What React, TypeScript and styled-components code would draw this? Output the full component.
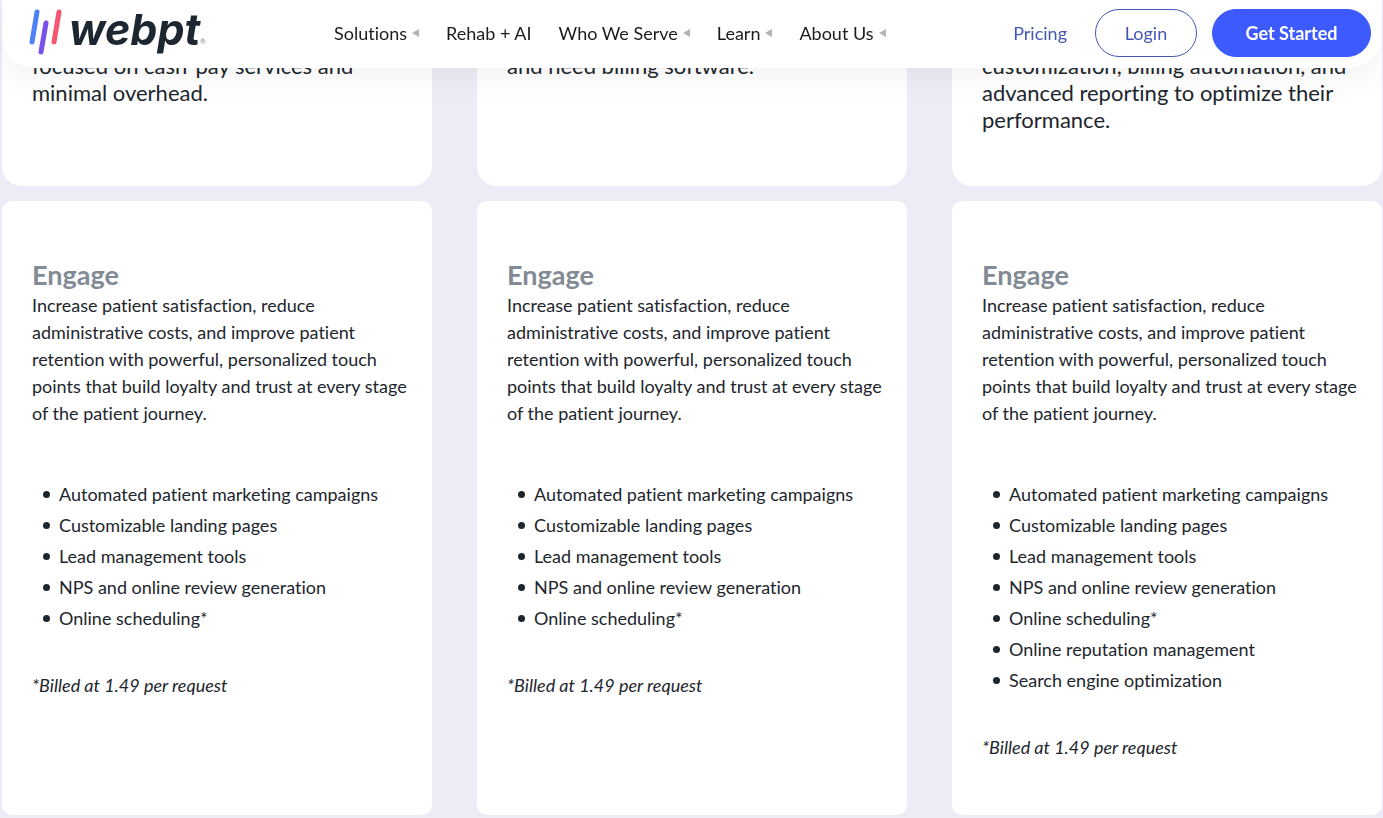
import React from "react";
import styled, { createGlobalStyle } from "styled-components";

const GlobalStyle = createGlobalStyle`
  *, *::before, *::after { box-sizing: border-box; }
  body {
    margin: 0;
    background: #ebecf5;
    color: #1d262d;
    font-family: Lato, "Liberation Sans", sans-serif;
    font-size: 18px;
    line-height: 27px;
    font-variant-ligatures: none;
  }
`;

const Header = styled.header`
  position: fixed;
  z-index: 2;
  top: 0;
  left: 2px;
  right: 2px;
  height: 68px;
  padding: 0 10px 2px 26px;
  display: flex;
  align-items: center;
  background: #fff;
  border-radius: 0 0 32px 32px;
  box-shadow: 0 10px 30px rgba(0, 0, 0, 0.05);
`;

const Logo = styled.a`
  display: block;
  height: 66px;
`;

const Nav = styled.nav`
  flex: 1;
  margin-left: 116px;
  display: flex;
  gap: 27px;
`;

const NavLink = styled.a`
  display: flex;
  align-items: center;
  gap: 5px;
  color: #1c1c1c;
  text-decoration: none;
  white-space: nowrap;
`;

const Caret = styled.svg`
  width: 7px;
  height: 8px;
  fill: #b4b4b4;
`;

const Actions = styled.div`
  display: flex;
  align-items: center;
`;

const PricingLink = styled.a`
  margin-right: 28px;
  color: #4458b4;
  text-decoration: none;
`;

const PillButton = styled.button<{ $filled?: boolean }>`
  height: 48px;
  margin-left: ${(p) => (p.$filled ? "15px" : "0")};
  padding: 0;
  width: ${(p) => (p.$filled ? "159px" : "102px")};
  border: 1px solid ${(p) => (p.$filled ? "#3d5afe" : "#4458b4")};
  border-radius: 24px;
  background: ${(p) => (p.$filled ? "#3d5afe" : "#fff")};
  color: ${(p) => (p.$filled ? "#fff" : "#4458b4")};
  font: ${(p) => (p.$filled ? "700" : "400")} 18px/27px Lato, sans-serif;
`;

const Plans = styled.main`
  display: grid;
  grid-template-columns: repeat(3, minmax(0, 1fr));
  column-gap: 45px;
  row-gap: 15px;
  padding: 0 1px 3px 2px;
`;

const SummaryCard = styled.section`
  padding: 52px 30px 53px;
  background: #fff;
  border-radius: 0 0 20px 20px;
  font-size: 22px;
`;

const Line = styled.span`
  display: block;
  white-space: nowrap;
`;

const FeatureCard = styled.section`
  padding: 58px 20px 54px 30px;
  background: #fff;
  border-radius: 10px;
`;

const Title = styled.h2`
  margin: 0 0 1px;
  color: #828b95;
  font-size: 27px;
  line-height: 32px;
`;

const Description = styled.p`
  margin: 0 0 54px;
`;

const FeatureList = styled.ul`
  margin: 0 0 40px;
  padding-left: 11px;
  list-style: none;
`;

const Feature = styled.li`
  display: flex;
  align-items: center;
  gap: 9px;
  margin-bottom: 4px;

  &::before {
    content: "";
    flex: none;
    width: 7px;
    height: 7px;
    border-radius: 50%;
    background: currentColor;
  }
`;

const Note = styled.p`
  margin: 0;
  font-style: italic;
`;

const navItems = [
  { label: "Solutions", menu: true },
  { label: "Rehab + AI", menu: false },
  { label: "Who We Serve", menu: true },
  { label: "Learn", menu: true },
  { label: "About Us", menu: true },
];

const baseFeatures = [
  "Automated patient marketing campaigns",
  "Customizable landing pages",
  "Lead management tools",
  "NPS and online review generation",
  "Online scheduling*",
];

const plans = [
  { summary: ["focused on cash-pay services and", "minimal overhead."], features: baseFeatures },
  { summary: ["and need billing software."], features: baseFeatures },
  {
    summary: ["customization, billing automation, and", "advanced reporting to optimize their", "performance."],
    features: [...baseFeatures, "Online reputation management", "Search engine optimization"],
  },
];

function WebptLogo() {
  return (
    <svg width="190" height="66" viewBox="0 -4 190 66" role="img" aria-label="webpt">
      <g fill="none" strokeWidth="5" strokeLinecap="round">
        <path d="M9 8L4 38" stroke="#4f82f7" />
        <path d="M18 19L13 48" stroke="#7a52e8" />
        <path d="M31 8L26 38" stroke="#f4576f" />
      </g>
      <text x="41" y="41" fontFamily="Inter, sans-serif" fontSize="43" fontWeight="700" fontStyle="italic" fill="#1d2731">
        webpt
      </text>
      <text x="172" y="40" fontFamily="Lato, sans-serif" fontSize="7" fill="#7d858c">
        ®
      </text>
    </svg>
  );
}

export default function App() {
  return (
    <>
      <GlobalStyle />
      <Header>
        <Logo href="#">
          <WebptLogo />
        </Logo>
        <Nav>
          {navItems.map((item) => (
            <NavLink href="#" key={item.label}>
              {item.label}
              {item.menu && (
                <Caret viewBox="0 0 7 8" aria-hidden="true">
                  <path d="M7 0V8L0 4Z" />
                </Caret>
              )}
            </NavLink>
          ))}
        </Nav>
        <Actions>
          <PricingLink href="#">Pricing</PricingLink>
          <PillButton type="button">Login</PillButton>
          <PillButton type="button" $filled>
            Get Started
          </PillButton>
        </Actions>
      </Header>
      <Plans>
        {plans.map((plan, i) => (
          <SummaryCard key={i}>
            {plan.summary.map((line) => (
              <Line key={line}>{line}</Line>
            ))}
          </SummaryCard>
        ))}
        {plans.map((plan, i) => (
          <FeatureCard key={i}>
            <Title>Engage</Title>
            <Description>
              Increase patient satisfaction, reduce <br />
              administrative costs, and improve patient <br />
              retention with powerful, personalized touch <br />
              points that build loyalty and trust at every stage <br />
              of the patient journey.
            </Description>
            <FeatureList>
              {plan.features.map((feature) => (
                <Feature key={feature}>{feature}</Feature>
              ))}
            </FeatureList>
            <Note>*Billed at 1.49 per request</Note>
          </FeatureCard>
        ))}
      </Plans>
    </>
  );
}
